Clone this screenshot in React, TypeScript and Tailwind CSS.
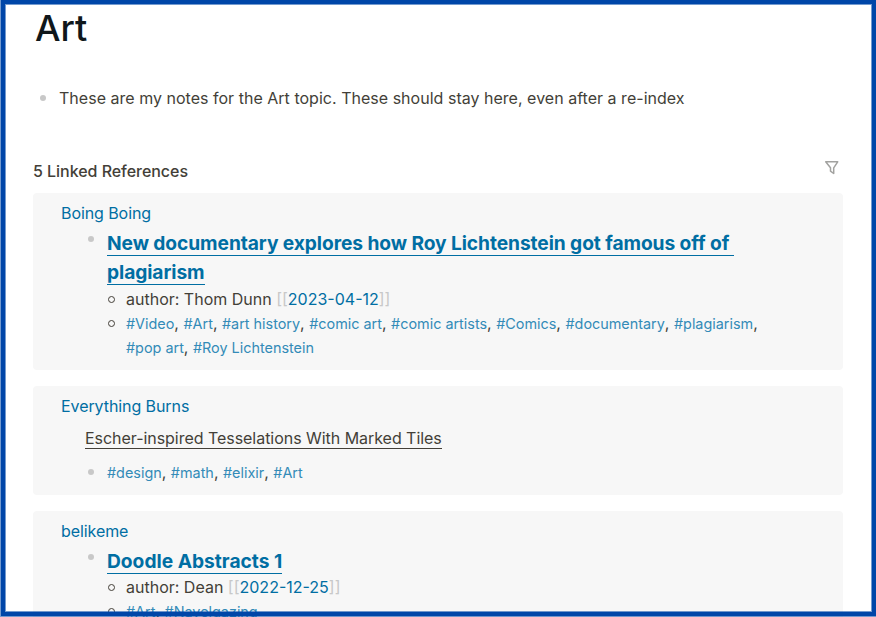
import React from "react";

const Bullet = ({ className = "" }: { className?: string }) => (
  <i className={"mr-[13px] h-[6px] w-[6px] shrink-0 rounded-full bg-[#c8c8c8] " + className} />
);

const Ring = () => <i className="mr-[11px] mt-[9px] h-[7px] w-[7px] shrink-0 rounded-full border border-[#433f38]" />;

function Tags({ items }: { items: string[] }) {
  return (
    <>
      {items.map((t, i) => (
        <React.Fragment key={t}>
          <a className="text-[14.4px] leading-none text-[#338bb8]">{t}</a>
          {i < items.length - 1 && ", "}
        </React.Fragment>
      ))}
    </>
  );
}

function Author({ name, date }: { name: string; date: string }) {
  return (
    <div className="ml-px flex h-6">
      <Ring />
      <p className="whitespace-pre">
        {"author: " + name + " "}
        <span className="text-[#c8c8c8]">[[</span>
        <a className="text-[#006ea3]">{date}</a>
        <span className="text-[#c8c8c8]">]]</span>
      </p>
    </div>
  );
}

function TagRow({ items }: { items: string[] }) {
  return (
    <div className="ml-px flex">
      <Ring />
      <p className="w-[650px]"><Tags items={items} /></p>
    </div>
  );
}

function Heading({ className, children }: { className: string; children: React.ReactNode }) {
  return (
    <h3 className={"pt-1 text-[19.2px] font-bold leading-[29px] text-[#006ea3] " + className}>{children}</h3>
  );
}

function Reference({ page, className, children }: { page: string; className: string; children: React.ReactNode }) {
  return (
    <section className={"rounded bg-[#f7f7f7] pl-7 pt-2 " + className}>
      <a className="block h-6 tracking-[-0.005em] text-[#006ea3]">{page}</a>
      {children}
    </section>
  );
}

export default function App() {
  return (
    <div className="relative h-[617px] w-[876px] overflow-hidden bg-white px-[33px] pt-[5px] font-['Inter',sans-serif] text-[16px] leading-6 text-[#433f38]">
      <h1 className="h-[46px] pl-[2px] text-[36px] font-[550] leading-[46px] text-[#10171b]">Art</h1>
      <div className="mt-[35px] flex h-6 items-center pl-[7px]">
        <Bullet />
        <p className="tracking-[0.02px]">These are my notes for the Art topic. These should stay here, even after a re-index</p>
      </div>
      <div className="mt-[49px] flex h-6 items-center justify-between pr-[3px]">
        <h2 className="font-medium tracking-[-0.04px]">5 Linked References</h2>
        <svg className="mb-[6px] h-4 w-4" viewBox="0 0 16 16" fill="none" stroke="#a2a2a0" strokeWidth="1.5" strokeLinejoin="round">
          <path d="M1.7 1.8h12L9.7 7.8v5.7L6.5 11.2V7.8z" />
        </svg>
      </div>
      <div className="mt-[10px] flex flex-col gap-4">
        <Reference page="Boing Boing" className="h-[177px]">
          <div className="flex pl-[27px]">
            <Bullet className="mt-[11px]" />
            <div>
              <Heading className="tracking-[-0.08px]">
                <span className="block h-[29px] w-fit"><span className="inline-block h-[27px] whitespace-pre border-b border-[#006ea3] align-top">{"New documentary explores how Roy Lichtenstein got famous off of "}</span></span>
                <span className="block h-[29px] w-fit"><span className="inline-block h-[27px] border-b border-[#006ea3] align-top">plagiarism</span></span>
              </Heading>
              <Author name="Thom Dunn" date="2023-04-12" />
              <TagRow items={["#Video", "#Art", "#art history", "#comic art", "#comic artists", "#Comics", "#documentary", "#plagiarism", "#pop art", "#Roy Lichtenstein"]} />
            </div>
          </div>
        </Reference>
        <Reference page="Everything Burns" className="h-[109px]">
          <div className="mt-2 pl-6"><span className="inline-block h-[23px] border-b border-[#433f38] align-top tracking-[-0.04px]">Escher-inspired Tesselations With Marked Tiles</span></div>
          <div className="mt-[10px] flex items-center pl-[27px]">
            <Bullet />
            <p><Tags items={["#design", "#math", "#elixir", "#Art"]} /></p>
          </div>
        </Reference>
        <Reference page="belikeme" className="h-[177px]">
          <div className="flex pl-[27px]">
            <Bullet className="mt-[11px]" />
            <div>
              <Heading className="h-8">
                <span className="inline-block h-[27px] border-b border-[#006ea3] align-top">Doodle Abstracts 1</span>
              </Heading>
              <Author name="Dean" date="2022-12-25" />
              <TagRow items={["#Art", "#Navelgazing"]} />
            </div>
          </div>
        </Reference>
      </div>
      <div className="absolute inset-0 border-b border-l border-[#0046a8]/55">
        <div className="h-full w-full border-4 border-[#0046a8]">
          <div className="h-full w-full border border-[#0046a8]/55" />
        </div>
      </div>
    </div>
  );
}
